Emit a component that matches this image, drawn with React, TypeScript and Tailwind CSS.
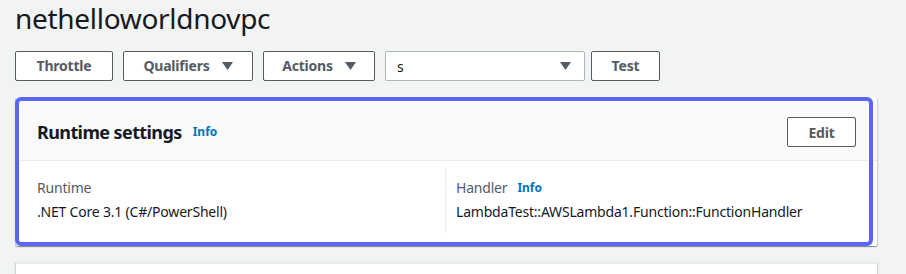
import React from "react";

const Caret = ({ className = "" }: { className?: string }) => (
  <svg width="11" height="8" viewBox="0 0 11 8" className={className}>
    <path d="M0 0 H11 L5.5 8 Z" fill="#545b64" />
  </svg>
);

const Btn = ({ children, w }: { children: React.ReactNode; w: string }) => (
  <button
    className={`h-[30px] ${w} flex items-center justify-center gap-[12px] bg-white border border-[#545b64] rounded-[2px] text-[14px] font-bold text-[#545b64] leading-none tracking-[-0.2px]`}
  >
    {children}
  </button>
);

export default function App() {
  return (
    <div
      className="w-[906px] h-[274px] overflow-hidden bg-[#f2f3f3]"
      style={{ fontFamily: '"Noto Sans", "Open Sans", Arial, sans-serif' }}
    >
      <div className="pl-[16px]">
        <h1 className="text-[28px] leading-[36px] text-[#16191f] font-normal pt-[0px] -ml-[1px] tracking-[-0.3px]">
          nethelloworldnovpc
        </h1>
        <div className="flex items-center mt-[15px] -ml-[1px]">
          <div className="w-[98px]">
            <Btn w="w-[98px]">Throttle</Btn>
          </div>
          <div className="ml-[10px]">
            <Btn w="w-[130px]">
              <span>Qualifiers</span>
              <Caret />
            </Btn>
          </div>
          <div className="ml-[10px]">
            <Btn w="w-[112px]">
              <span>Actions</span>
              <Caret />
            </Btn>
          </div>
          <div className="ml-[10px] w-[200px] h-[30px] bg-white border border-[#aab7b8] rounded-[2px] flex items-center justify-between pl-[11px] pr-[13px]">
            <span className="text-[14px] text-[#16191f]">s</span>
            <Caret />
          </div>
          <div className="ml-[6px]">
            <Btn w="w-[69px]">Test</Btn>
          </div>
        </div>

        <div className="relative mt-[16px] w-[861px]">
          <div className="bg-white shadow-[0_1px_1px_0_rgba(0,28,36,0.3),1px_1px_1px_0_rgba(0,28,36,0.15),-1px_1px_1px_0_rgba(0,28,36,0.15)] rounded-[2px]">
            <div className="bg-[#fafafa] border-b border-[#eaeded] h-[64px] pt-[20px] px-[21px] flex items-start justify-between">
              <div className="flex h-[30px] items-center">
                <span className="text-[18px] font-bold text-[#16191f] leading-[30px] tracking-[-0.6px]">Runtime settings</span>
                <span className="ml-[11px] text-[12px] font-bold text-[#0073bb] leading-[30px]">Info</span>
              </div>
              <button className="h-[30px] w-[69px] bg-white border border-[#545b64] rounded-[2px] text-[14px] font-bold text-[#545b64] tracking-[-0.2px]">
                Edit
              </button>
            </div>
            <div className="pt-[6px] pb-[13px] pl-[20px] flex tracking-[-0.2px]">
              <div className="w-[409px] py-[10px] pl-[1px]">
                <div className="text-[14px] leading-[22px] text-[#545b64]">Runtime</div>
                <div className="text-[14px] leading-[22px] text-[#16191f] mt-[2px]">.NET Core 3.1 (C#/PowerShell)</div>
              </div>
              <div className="border-l border-[#eaeded] py-[10px] pl-[10px]">
                <div className="text-[14px] leading-[22px] text-[#545b64] flex items-center">
                  <span>Handler</span>
                  <span className="ml-[10px] text-[12px] font-bold text-[#0073bb] tracking-normal">Info</span>
                </div>
                <div className="text-[14px] leading-[22px] text-[#16191f] mt-[2px]">
                  LambdaTest::AWSLambda1.Function::FunctionHandler
                </div>
              </div>
            </div>
          </div>
          <div className="absolute left-[-1px] top-0 w-[858px] h-[149px] border-[4px] border-[#5b65f4] rounded-[6px] pointer-events-none" />
        </div>

        <div className="mt-[17px] w-[861px] h-[40px] bg-white border-t border-[#eaeded] shadow-[1px_0_1px_0_rgba(0,28,36,0.15),-1px_0_1px_0_rgba(0,28,36,0.15)]" />
      </div>
    </div>
  );
}
